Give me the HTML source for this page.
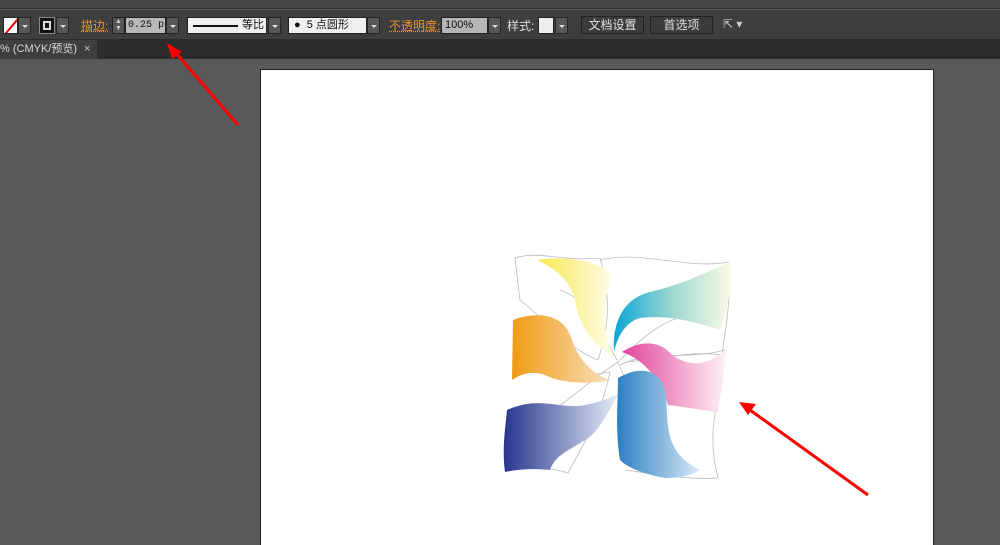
<!DOCTYPE html>
<html><head><meta charset="utf-8"><style>
*{margin:0;padding:0;box-sizing:border-box}
html{width:1000px;height:545px;overflow:hidden}
body{width:1000px;height:545px;overflow:hidden;background:#595959;font-family:"Liberation Sans","Noto Sans CJK SC",sans-serif;font-size:12px;position:relative}
.a{position:absolute;white-space:nowrap}
.menu{left:0;top:0;width:1000px;height:9px;background:#484848;border-bottom:1px solid #2e2e2e}
.tb{left:0;top:10px;width:1000px;height:30px;background:#3e3e3e;border-bottom:1px solid #2a2a2a}
.tabs{left:0;top:40px;width:1000px;height:19px;background:#2c2c2c}
.tab{left:0;top:40px;width:97px;height:19px;background:#3e3e3e;color:#d8d8d8;font-size:11px;line-height:19px}
.dd{background:#575757;border:1px solid #262626;width:13px;height:17px}
.dd:after{content:"";position:absolute;left:3px;top:7px;border-left:3px solid transparent;border-right:3px solid transparent;border-top:3px solid #ddd}
.lab{color:#e8922e;font-size:12px;text-decoration:underline dotted}
.fld{background:#efefef;border:1px solid #222;height:17px;font-size:11px;line-height:15px;color:#111;overflow:hidden}
.btn{background:#3c3c3c;border:1px solid #222;height:18px;color:#e0e0e0;font-size:12px;line-height:16px;text-align:center}
</style></head><body>
<div class="a menu"></div>
<div class="a tb"></div>
<div class="a" style="left:3px;top:17px;width:15px;height:17px;background:#fff;border:1px solid #222;overflow:hidden"><div style="position:absolute;left:-3px;top:7px;width:22px;height:2px;background:#e00;transform:rotate(-50deg)"></div></div>
<div class="a dd" style="left:18px;top:17px"></div>
<div class="a" style="left:39px;top:17px;width:16px;height:17px;background:#111;border:1px solid #888"><div style="position:absolute;left:3px;top:3px;width:8px;height:9px;border:2px solid #ddd"></div></div>
<div class="a dd" style="left:56px;top:17px"></div>
<div class="a lab" style="left:81px;top:17px">描边:</div>
<div class="a" style="left:112px;top:17px;width:13px;height:17px;background:#555;border:1px solid #222;color:#ccc;font-size:7px;line-height:7px;text-align:center">▲<br>▼</div>
<div class="a fld" style="left:125px;top:17px;width:41px;background:#b8b8b8;font-family:'Liberation Mono',monospace;font-size:10px;padding-left:2px">0.25 p</div>
<div class="a dd" style="left:166px;top:17px"></div>
<div class="a fld" style="left:187px;top:17px;width:80px"><div style="position:absolute;left:5px;top:7px;width:45px;height:2px;background:#111"></div><span style="position:absolute;left:54px;top:0">等比</span></div>
<div class="a dd" style="left:268px;top:17px"></div>
<div class="a fld" style="left:288px;top:17px;width:79px;padding-left:5px">●&nbsp; 5 点圆形</div>
<div class="a dd" style="left:367px;top:17px"></div>
<div class="a lab" style="left:389px;top:17px">不透明度:</div>
<div class="a fld" style="left:441px;top:17px;width:47px;background:#b5b5b5;padding-left:3px">100%</div>
<div class="a dd" style="left:488px;top:17px"></div>
<div class="a" style="left:507px;top:17px;color:#ddd">样式:</div>
<div class="a" style="left:538px;top:17px;width:16px;height:17px;background:#eee;border:1px solid #222"></div>
<div class="a dd" style="left:555px;top:17px"></div>
<div class="a btn" style="left:581px;top:16px;width:63px">文档设置</div>
<div class="a btn" style="left:650px;top:16px;width:63px">首选项</div>
<div class="a" style="left:723px;top:17px;color:#ccc;font-size:12px">⇱ ▾</div>
<div class="a tabs"></div>
<div class="a tab">% (CMYK/预览)<span style="position:absolute;left:84px;color:#ccc">×</span></div>
<div class="a" style="left:260px;top:69px;width:674px;height:476px;background:#fff;border:1px solid #222;border-bottom:none"></div>
<svg class="a" style="left:0;top:0" width="1000" height="545">
<defs>
<linearGradient id="gy" x1="0" x2="1"><stop offset="0" stop-color="#f7e84a"/><stop offset="1" stop-color="#fffdf0"/></linearGradient>
<linearGradient id="gc" x1="0" x2="1"><stop offset="0" stop-color="#0aa6d8"/><stop offset=".5" stop-color="#9dd8d0"/><stop offset="1" stop-color="#fbfbe6"/></linearGradient>
<linearGradient id="go" x1="0" x2="1"><stop offset="0" stop-color="#f09a14"/><stop offset="1" stop-color="#f8e2c0"/></linearGradient>
<linearGradient id="gp" x1="0" x2="1"><stop offset="0" stop-color="#e2449a"/><stop offset="1" stop-color="#fdf0f6"/></linearGradient>
<linearGradient id="gd" x1="0" x2="1"><stop offset="0" stop-color="#28358c"/><stop offset="1" stop-color="#e4eef7"/></linearGradient>
<linearGradient id="gb" x1="0" x2="1"><stop offset="0" stop-color="#2a7fc2"/><stop offset="1" stop-color="#d9e9f5"/></linearGradient>
</defs>
<g stroke="#bbb" stroke-width=".8" fill="none">
<path d="M515 258 C540 250 560 262 600 258 C612 300 608 330 598 360 C570 350 545 320 520 300 Z"/>
<path d="M600 260 C640 250 690 270 728 262 C732 300 725 330 722 355 C690 350 660 360 625 362"/>
<path d="M512 360 C530 370 560 380 610 372 C600 420 580 450 568 473 C545 465 520 470 505 470"/>
<path d="M620 365 C650 350 690 360 725 350 C720 400 705 430 718 478 C690 480 660 475 625 470"/>
<path d="M617 360 C600 330 590 300 560 290 M618 362 C640 340 660 320 690 315 M618 362 C630 390 640 420 650 440 M618 362 C590 380 570 400 540 420"/>
</g>
<path d="M537 260 C570 255 600 262 612 275 C603 300 600 330 615 358 C595 345 580 330 575 300 C570 280 555 268 537 260 Z" fill="url(#gy)"/>
<path d="M614 352 C612 320 625 298 650 292 C680 285 700 275 730 262 C732 290 728 310 720 330 C690 320 665 315 640 318 C625 322 617 338 614 352 Z" fill="url(#gc)"/>
<path d="M513 320 C540 310 565 315 572 340 C580 365 600 378 612 380 C590 385 560 383 545 375 C530 370 520 375 512 380 Z" fill="url(#go)"/>
<path d="M622 352 C640 340 660 340 672 355 C690 368 710 365 725 350 C725 380 720 395 718 412 C700 410 685 407 668 405 C660 380 645 360 622 352 Z" fill="url(#gp)"/>
<path d="M507 410 C540 395 560 410 585 405 C600 402 610 398 618 394 C605 420 595 435 585 440 C570 450 555 455 550 470 C530 468 515 470 505 472 C502 450 505 430 507 410 Z" fill="url(#gd)"/>
<path d="M618 378 C640 365 660 370 665 390 C670 420 660 450 700 470 C690 476 680 478 665 478 C650 475 630 470 620 460 C615 430 618 400 618 378 Z" fill="url(#gb)"/>
<g stroke="#f00" stroke-width="3" fill="#f00">
<line x1="238" y1="125" x2="175" y2="52"/>
<polygon points="167,43 182,52 172,59" stroke="none"/>
<line x1="868" y1="495" x2="750" y2="410"/>
<polygon points="739,402 756,404 748,415" stroke="none"/>
</g>
</svg>
</body></html>
